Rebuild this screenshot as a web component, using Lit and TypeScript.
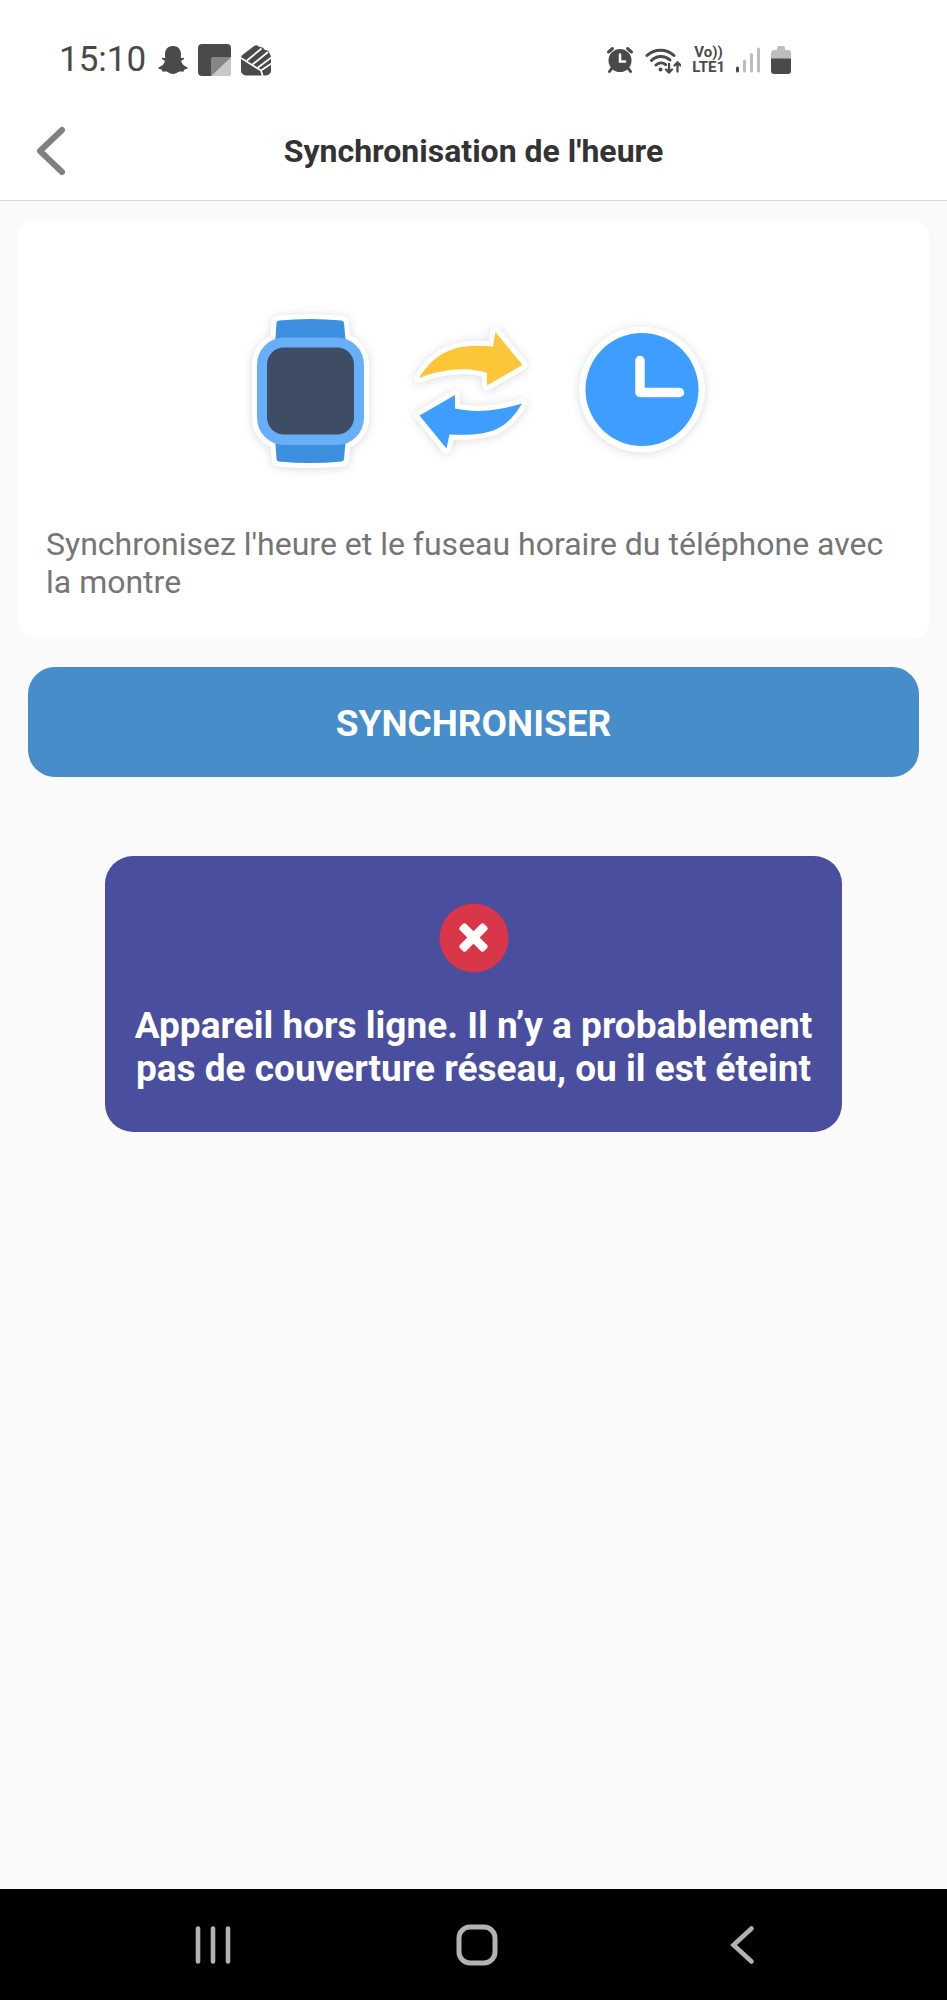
import { LitElement, html, css } from "lit";
import { customElement } from "lit/decorators.js";

@customElement("phone-status-bar")
class PhoneStatusBar extends LitElement {
  static styles = css`
    :host {
      display: flex;
      justify-content: space-between;
      align-items: center;
      height: 101px;
      box-sizing: border-box;
      padding: 19px 156px 0 59px;
      background: #fff;
      color: #4a4a4a;
    }
    .group {
      display: flex;
      align-items: center;
    }
    .left {
      gap: 10px;
    }
    .right {
      gap: 11px;
    }
    .time {
      font-size: 35px;
      line-height: 40px;
    }
    .volte {
      display: flex;
      flex-direction: column;
      align-items: center;
      font-size: 15px;
      font-weight: 700;
      line-height: 15px;
    }
    svg {
      display: block;
      flex: none;
    }
  `;

  render() {
    return html`
      <div class="group left">
        <time class="time">15:10</time>
        <svg width="32" height="34" viewBox="0 0 32 34" fill="#4a4a4a" aria-hidden="true">
          <path
            d="M17 3c5 0 8 3.500 8 8.200l-.2 3.600c1 .4 2-.5 2.800 0 1.200.8-.2 2-2.600 3 .8 3.200 3.200 5.600 6.600 6.600.8.600-.6 1.800-3.200 2.200l-.8 2c-1.400.2-3-.5-4.800.2-2 .9-3.200 2.200-5.800 2.200s-3.800-1.300-5.800-2.200c-1.800-.7-3.400 0-4.800-.2l-.8-2C3 26.200 1.600 25 2.400 24.400c3.400-1 5.800-3.400 6.600-6.600-2.400-1-3.800-2.200-2.600-3 .8-.5 1.800.4 2.800 0L9 11.200C9 6.500 12 3 17 3z"
          />
        </svg>
        <svg width="33" height="34" viewBox="0 0 33 34" aria-hidden="true">
          <rect y="1" width="33" height="32" rx="4" fill="#4a4a4a" />
          <path d="M15 14h18L13 33V16a2 2 0 0 1 2-2z" fill="#858585" />
          <path d="M33 14v15a4 4 0 0 1-4 4H13z" fill="#c8c8c8" />
        </svg>
        <svg width="30" height="34" viewBox="0 0 30 34" aria-hidden="true">
          <path
            d="M0 16Q-.5 13 2 11.500L13 3Q16 1 18.500 4Q22 3.500 24 7Q28 7 28.500 10.500Q30 12 30 15V27.500a5 5 0 0 1-5 5H5a5 5 0 0 1-5-5z"
            fill="#4a4a4a"
          />
          <path
            d="M-1 14.500L20 27.500L22 34M20 27.500L31 20M6 17.500L20.500 5.500M11.500 21.500L27 9M17 24.500L31 14"
            fill="none"
            stroke="#fff"
            stroke-width="1.700"
          />
        </svg>
      </div>
      <div class="group right">
        <svg width="28" height="28" viewBox="0 0 28 28" fill="none" stroke="#4a4a4a" aria-hidden="true">
          <circle cx="14" cy="14.500" r="11.500" fill="#4a4a4a" stroke="none" />
          <path d="M2.500 6L6.500 2.500M25.500 6L21.500 2.500M6 22L3.500 25.500M22 22l2.500 3.500" stroke-width="3" stroke-linecap="round" />
          <path d="M14 8.500v7h5" stroke="#fff" stroke-width="2.500" stroke-linecap="round" />
        </svg>
        <svg width="36" height="28" viewBox="0 0 36 28" fill="none" stroke="#4a4a4a" stroke-width="3" stroke-linecap="round" aria-hidden="true">
          <path d="M2 9.500a20 20 0 0 1 27 0M6.500 14.500a13.500 13.500 0 0 1 18.500-.5M11 19a7.500 7.500 0 0 1 9.500-.5" />
          <circle cx="15.500" cy="23.500" r="2" fill="#4a4a4a" stroke="none" />
          <path d="M24 18v8M21 23.500l3 3 3-3M32.500 25.500v-8M29.500 19.500l3-3 3 3" stroke-width="2.300" />
        </svg>
        <div class="volte"><span>Vo))</span><span>LTE1</span></div>
        <svg width="24" height="28" viewBox="1 0 24 28" fill="none" stroke-width="3" stroke-linecap="round" aria-hidden="true">
          <path d="M2.500 22v3" stroke="#4a4a4a" />
          <path d="M9.500 15v10M16.500 8.500V25M23.500 3v22" stroke="#bdbdbd" />
        </svg>
        <svg width="20" height="28" viewBox="0 0 20 28" aria-hidden="true">
          <path d="M6 2a2 2 0 0 1 2-2h4a2 2 0 0 1 2 2v2h3a3 3 0 0 1 3 3v7H0V7a3 3 0 0 1 3-3h3z" fill="#bdbdbd" />
          <path d="M0 12.500h20V25a3 3 0 0 1-3 3H3a3 3 0 0 1-3-3z" fill="#4a4a4a" />
        </svg>
      </div>
    `;
  }
}

@customElement("phone-nav-bar")
class PhoneNavBar extends LitElement {
  static styles = css`
    :host {
      display: grid;
      grid-template-columns: repeat(3, 1fr);
      height: 111px;
      box-sizing: border-box;
      padding: 0 73px 0 81px;
      background: #000;
    }
    .key {
      display: flex;
      align-items: center;
      justify-content: center;
      border: 0;
      padding: 0;
      background: none;
    }
  `;

  render() {
    return html`
      <button class="key" aria-label="Applications récentes">
        <svg width="42" height="42" viewBox="0 0 42 42" stroke="#b2b2b2" stroke-width="4.600" stroke-linecap="round">
          <path d="M6 4.500v33M21 4.500v33M36 4.500v33" />
        </svg>
      </button>
      <button class="key" aria-label="Accueil">
        <svg width="42" height="42" viewBox="0 0 42 42" fill="none" stroke="#b2b2b2" stroke-width="5">
          <rect x="3" y="3" width="36" height="36" rx="11" />
        </svg>
      </button>
      <button class="key" aria-label="Retour">
        <svg width="42" height="42" viewBox="0 0 42 42" fill="none" stroke="#b2b2b2" stroke-width="4.600" stroke-linecap="round">
          <path d="M30.500 4.500L12.500 21l18 16.500" />
        </svg>
      </button>
    `;
  }
}

@customElement("app-root")
class AppRoot extends LitElement {
  static styles = css`
    :host {
      display: flex;
      flex-direction: column;
      min-height: 100vh;
      background: #fafafa;
      font-family: Roboto, "Liberation Sans", sans-serif;
    }
    .header {
      display: grid;
      grid-template-columns: 100px 1fr 100px;
      align-items: center;
      height: 100px;
      box-sizing: border-box;
      border-bottom: 1px solid #d6d6d6;
      background: #fff;
    }
    .back {
      display: flex;
      align-items: center;
      height: 100%;
      padding: 0 0 0 34px;
      border: 0;
      background: none;
    }
    .title {
      margin: 0;
      text-align: center;
      font-size: 32px;
      line-height: 38px;
      font-weight: 700;
      color: #333;
    }
    .content {
      flex: 1;
      display: flex;
      flex-direction: column;
      padding: 18px;
    }
    .card {
      padding: 91px 28px 38px;
      border-radius: 18px;
      background: #fff;
    }
    .art {
      display: flex;
      justify-content: center;
      gap: 44px;
    }
    .figure {
      display: block;
      overflow: visible;
      filter: drop-shadow(0 1px 5px rgba(0, 0, 0, 0.14));
    }
    .description {
      margin: 55px 0 0;
      font-size: 32px;
      line-height: 38px;
      color: #757575;
    }
    .sync {
      height: 110px;
      margin: 28px 10px 0;
      padding: 2px 0 0;
      border: 0;
      border-radius: 27px;
      background: #468dca;
      color: #fff;
      font: inherit;
      font-size: 37px;
      font-weight: 700;
    }
    .toast {
      display: flex;
      flex-direction: column;
      align-items: center;
      margin: 79px 87px 0;
      padding: 47px 20px 42px;
      border-radius: 28px;
      background: #4a4e9f;
      color: #fff;
    }
    .message {
      margin: 31px 0 0;
      text-align: center;
      font-size: 37px;
      line-height: 43px;
      font-weight: 700;
    }
  `;

  render() {
    return html`
      <phone-status-bar></phone-status-bar>
      <header class="header">
        <button class="back" aria-label="Retour">
          <svg width="34" height="50" viewBox="0 0 34 50" fill="none" stroke="#808080" stroke-width="6" stroke-linecap="round" stroke-linejoin="round">
            <path d="M28 4L6 25l22 21" />
          </svg>
        </button>
        <h1 class="title">Synchronisation de l'heure</h1>
      </header>
      <main class="content">
        <section class="card">
          <div class="art">
            <svg class="figure" width="129" height="160" viewBox="241 310 129 160" aria-hidden="true">
              <g fill="#fff" stroke="#fff" stroke-width="10" stroke-linejoin="round">
                <path d="M275 345l1.500-22q0-2 2.500-2.500 31-3 62.500 0 2.500 .5 2.500 2.500l2 22v92l-2 22q0 2-2.500 2.500-31.500 3-62.500 0-2.500-.5-2.500-2.500l-1.500-22z" />
                <rect x="257" y="337.500" width="107" height="107.500" rx="27" />
              </g>
              <path d="M275 345l1.500-22q0-2 2.500-2.500 31-3 62.500 0 2.500 .5 2.500 2.500l2 22v92l-2 22q0 2-2.500 2.500-31.500 3-62.500 0-2.500-.5-2.500-2.500l-1.500-22z" fill="#3d8fe0" />
              <rect x="257" y="337.500" width="107" height="107.500" rx="27" fill="#67aff9" />
              <rect x="267" y="347.500" width="87" height="87" rx="17" fill="#3e4d63" />
            </svg>
            <svg class="figure" width="120" height="160" viewBox="414 310 120 160" stroke="#fff" stroke-width="10" stroke-linejoin="round" paint-order="stroke" aria-hidden="true">
              <path d="M419 378C436 351 456 343 493 346.500L495.500 332L522.500 365L487 385.500V373C470 367 445 368 419 378z" fill="#fdc638" />
              <path d="M419.500 415.500L455 395V408.500C476 413 497 411 522 403.500C505 432 488 436 449.500 434.500L446.500 448.500z" fill="#3d9eff" />
            </svg>
            <svg class="figure" width="128" height="160" viewBox="578 310 128 160" aria-hidden="true">
              <circle cx="642" cy="389.500" r="63" fill="#fff" />
              <circle cx="642" cy="389.500" r="56.500" fill="#3d9eff" />
              <path d="M640 360.500V392.500H679.500" fill="none" stroke="#fff" stroke-width="9.500" stroke-linecap="round" stroke-linejoin="round" />
            </svg>
          </div>
          <p class="description">Synchronisez l'heure et le fuseau horaire du téléphone avec la montre</p>
        </section>
        <button class="sync">SYNCHRONISER</button>
        <section class="toast" role="alert">
          <svg width="70" height="70" viewBox="0 0 70 70" aria-hidden="true">
            <circle cx="35" cy="35" r="34.500" fill="#d9364a" />
            <g fill="#fff" transform="translate(34.500 34.500) rotate(45)">
              <rect x="-17" y="-4.300" width="34" height="8.600" rx="2" />
              <rect x="-4.300" y="-17" width="8.600" height="34" rx="2" />
            </g>
          </svg>
          <p class="message">Appareil hors ligne. Il n’y a probablement pas de couverture réseau, ou il est éteint</p>
        </section>
      </main>
      <phone-nav-bar></phone-nav-bar>
    `;
  }
}
